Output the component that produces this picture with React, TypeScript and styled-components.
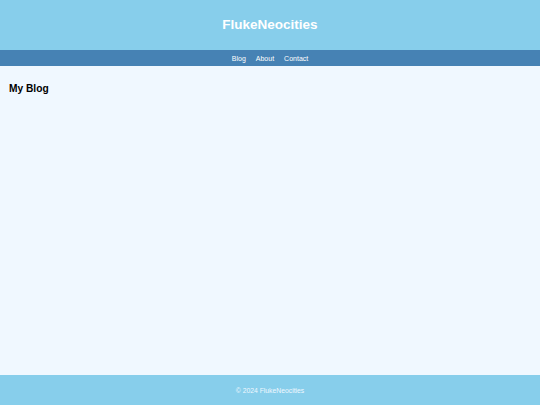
import React from "react";
import styled, { createGlobalStyle } from "styled-components";

const Global = createGlobalStyle`
  html, body { margin: 0; padding: 0; }
  body {
    font-family: "Liberation Sans", Arial, sans-serif;
    background: #f0f8ff;
  }
`;

const Page = styled.div`
  display: flex;
  flex-direction: column;
  min-height: 100vh;
  background: #f0f8ff;
`;

const Header = styled.header`
  height: 50px;
  background: #87ceeb;
  display: flex;
  align-items: center;
  justify-content: center;
`;

const Title = styled.h1`
  margin: 0;
  color: #ffffff;
  font-size: 13.5px;
  font-weight: bold;
  line-height: 1;
`;

const Nav = styled.nav`
  height: 16px;
  background: #4682b4;
  display: flex;
  align-items: center;
  justify-content: center;
  gap: 10px;
`;

const NavLink = styled.a`
  color: #ffffff;
  text-decoration: none;
  font-size: 7px;
  line-height: 1;
`;

const Main = styled.main`
  flex: 1;
  padding: 9px 9px;
`;

const Heading = styled.h2`
  margin: 8px 0;
  font-size: 10.2px;
  font-weight: bold;
  color: #000000;
`;

const Footer = styled.footer`
  height: 30px;
  background: #87ceeb;
  display: flex;
  align-items: center;
  justify-content: center;
`;

const FooterText = styled.p`
  margin: 0;
  color: #f0f8ff;
  font-size: 6.8px;
`;

export default function App() {
  return (
    <Page>
      <Global />
      <Header>
        <Title>FlukeNeocities</Title>
      </Header>
      <Nav>
        <NavLink href="#">Blog</NavLink>
        <NavLink href="#">About</NavLink>
        <NavLink href="#">Contact</NavLink>
      </Nav>
      <Main>
        <Heading>My Blog</Heading>
      </Main>
      <Footer>
        <FooterText>© 2024 FlukeNeocities</FooterText>
      </Footer>
    </Page>
  );
}
